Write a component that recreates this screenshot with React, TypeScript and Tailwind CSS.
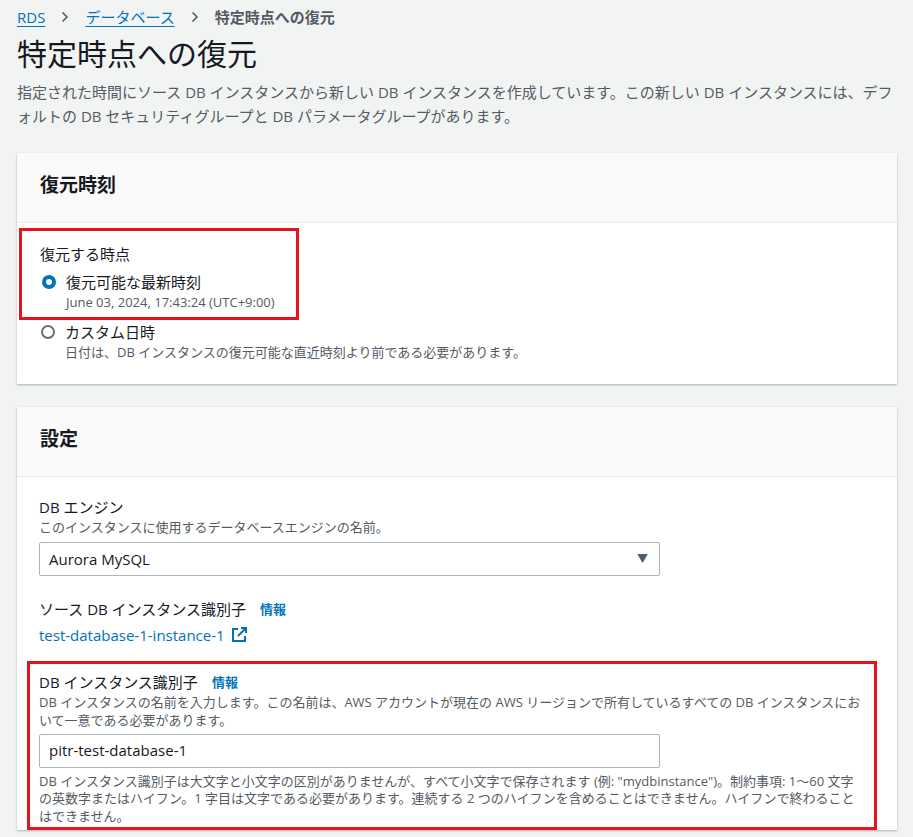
import { ChevronRight } from "lucide-react";

const font = { fontFamily: '"Open Sans", "Noto Sans CJK JP", sans-serif' };

function Radio({ checked }: { checked?: boolean }) {
  return checked ? (
    <span className="mt-[4px] h-[14px] w-[14px] shrink-0 rounded-full border-[4px] border-[#0073bb] bg-white" />
  ) : (
    <span className="mt-[4px] h-[14px] w-[14px] shrink-0 rounded-full border-[2px] border-[#687078] bg-white" />
  );
}

function ExternalIcon() {
  return (
    <svg width="16" height="16" viewBox="0 0 16 16" fill="none" stroke="#0073bb" strokeWidth="2">
      <path d="M7 2H2v12h12V9" />
      <path d="M10 1h5v5M15 1 7 9" />
    </svg>
  );
}

export default function App() {
  return (
    <div className="min-h-[837px] bg-[#f2f3f3] text-[#16191f]" style={font}>
      <div className="pl-[17px] pr-[16px] pt-[6px]">
        <div className="flex items-center gap-[12px] text-[15px] leading-[22px]">
          <a className="text-[#0073bb] underline underline-offset-[3px]">RDS</a>
          <ChevronRight className="h-4 w-4 text-[#545b64]" strokeWidth={2.5} />
          <a className="text-[#0073bb] underline underline-offset-[3px]">データベース</a>
          <ChevronRight className="h-4 w-4 text-[#545b64]" strokeWidth={2.5} />
          <span className="font-bold text-[#545b64]">特定時点への復元</span>
        </div>
        <h1 className="mt-[7px] text-[30px] leading-[38px]">特定時点への復元</h1>
        <p className="mt-[7px] text-[15px] leading-[24px] text-[#545b64]">
          指定された時間にソース DB インスタンスから新しい DB インスタンスを作成しています。この新しい DB インスタンスには、デフォルトの DB セキュリティグループと DB パラメータグループがあります。
        </p>

        <div className="mt-[25px] bg-white shadow-[0_1px_2px_rgba(0,28,36,0.3)]">
          <div className="h-[70px] border-b border-[#eaeded] bg-[#fafafa] pl-[23px] pt-[18px] text-[19px] font-bold leading-[28px]">
            復元時刻
          </div>
          <div className="pb-[22px] pl-[2px] pt-[5px]">
            <div className="w-[280px] border-[3px] border-[#e5141f] pb-[5px] pl-[18px] pt-[12px]">
              <div className="text-[15px] leading-[22px]">復元する時点</div>
              <div className="mt-[6px] flex gap-[10px] pl-[2px]">
                <Radio checked />
                <div>
                  <div className="text-[15px] leading-[22px]">復元可能な最新時刻</div>
                  <div className="text-[13px] leading-[19px] text-[#545b64]">June 03, 2024, 17:43:24 (UTC+9:00)</div>
                </div>
              </div>
            </div>
            <div className="mt-[1px] flex gap-[10px] pl-[22px]">
              <Radio />
              <div>
                <div className="text-[15px] leading-[22px]">カスタム日時</div>
                <div className="text-[13px] leading-[19px] text-[#545b64]">日付は、DB インスタンスの復元可能な直近時刻より前である必要があります。</div>
              </div>
            </div>
          </div>
        </div>

        <div className="mt-[23px] bg-white shadow-[0_1px_2px_rgba(0,28,36,0.3)]">
          <div className="h-[70px] border-b border-[#eaeded] bg-[#fafafa] pl-[23px] pt-[18px] text-[19px] font-bold leading-[28px]">
            設定
          </div>
          <div className="pl-[22px] pr-[20px] pt-[19px]">
            <div className="text-[15px] leading-[22px]">DB エンジン</div>
            <div className="text-[13px] leading-[19px] text-[#545b64]">このインスタンスに使用するデータベースエンジンの名前。</div>
            <div className="mt-[5px] flex h-[34px] w-[621px] items-center justify-between rounded-[2px] border border-[#aab7b8] pl-[9px] pr-[11px] text-[15px]">
              <span>Aurora MySQL</span>
              <span className="text-[11px] text-[#545b64]">▼</span>
            </div>
            <div className="mt-[22px] flex items-center gap-[14px] text-[15px] leading-[22px]">
              <span>ソース DB インスタンス識別子</span>
              <span className="text-[13px] font-bold text-[#0073bb]">情報</span>
            </div>
            <div className="mt-[4px] flex items-center gap-[6px] text-[15px] text-[#0073bb]">
              <span>test-database-1-instance-1</span>
              <ExternalIcon />
            </div>
            <div className="-ml-[12px] mt-[14px] border-[3px] border-[#e5141f] pb-[2px] pl-[9px] pr-[8px] pt-[7px]">
              <div className="flex items-center gap-[14px] text-[15px] leading-[22px]">
                <span>DB インスタンス識別子</span>
                <span className="text-[13px] font-bold text-[#0073bb]">情報</span>
              </div>
              <div className="text-[13px] leading-[18px] text-[#545b64]">
                DB インスタンスの名前を入力します。この名前は、AWS アカウントが現在の AWS リージョンで所有しているすべての DB インスタンスにおいて一意である必要があります。
              </div>
              <div className="mt-[5px] flex h-[34px] w-[621px] items-center rounded-[2px] border border-[#aab7b8] pl-[9px] text-[15px]">
                pitr-test-database-1
              </div>
              <div className="mt-[5px] text-[13px] leading-[17.5px] text-[#545b64]">
                DB インスタンス識別子は大文字と小文字の区別がありませんが、すべて小文字で保存されます (例: "mydbinstance")。制約事項: 1～60 文字の英数字またはハイフン。1 字目は文字である必要があります。連続する 2 つのハイフンを含めることはできません。ハイフンで終わることはできません。
              </div>
            </div>
          </div>
        </div>
      </div>
    </div>
  );
}
